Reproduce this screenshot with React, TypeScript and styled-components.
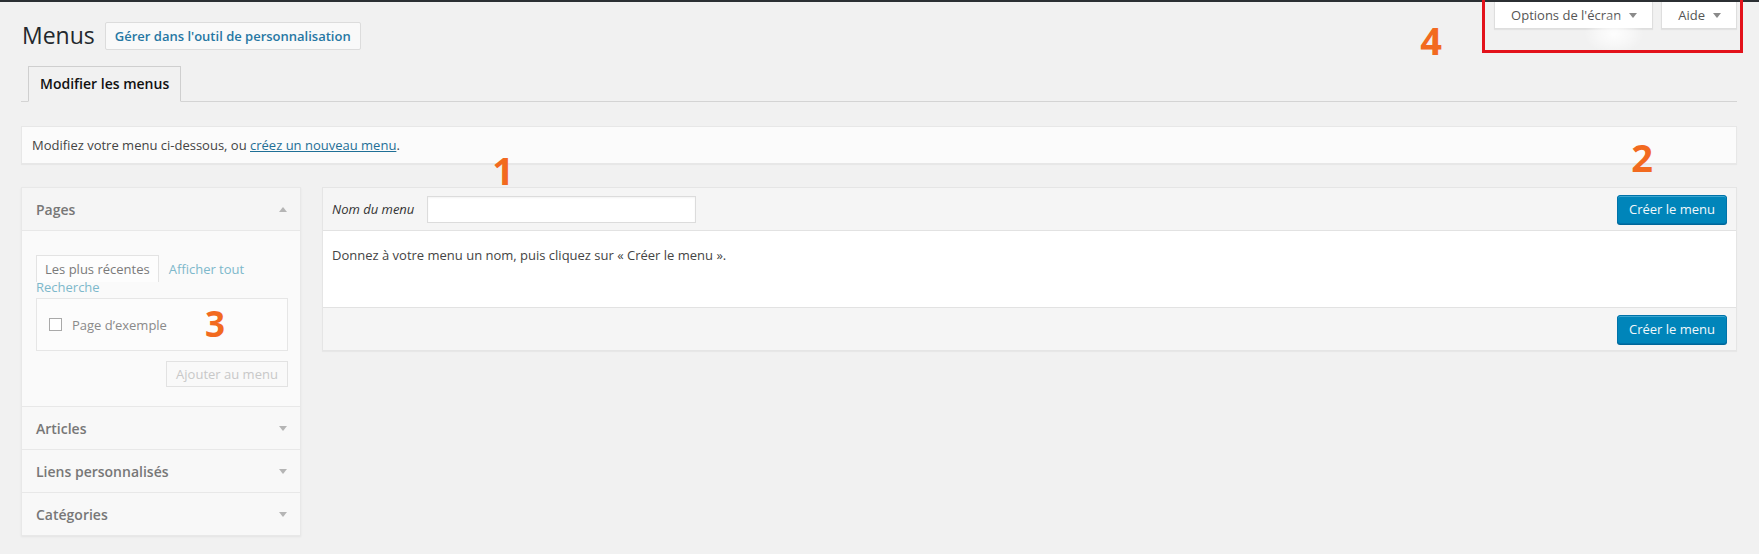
import React from 'react';
import styled, {createGlobalStyle} from 'styled-components';

const GlobalStyle = createGlobalStyle`
  body {
    margin: 0;
    background: #f1f1f1;
    font-family: "Open Sans", "Liberation Sans", sans-serif;
    font-size: 13px;
    color: #444;
  }
`;

const Page = styled.div`
  position: relative;
  min-height: 554px;
`;

const AdminBarEdge = styled.div`
  height: 2px;
  background: #2b2f33;
`;

const Wrap = styled.div`
  padding: 0 22px 0 21px;
`;

const TopRow = styled.div`
  display: flex;
  justify-content: space-between;
  align-items: flex-start;
`;

const TitleGroup = styled.div`
  display: flex;
  align-items: center;
  margin-top: 19px;
`;

const PageTitle = styled.h1`
  margin: 0 0 0 1px;
  font-size: 23px;
  font-weight: 400;
  line-height: 29px;
  color: #23282d;
`;

const TitleAction = styled.a`
  margin-left: 10px;
  height: 28px;
  box-sizing: border-box;
  padding: 0 9px;
  border: 1px solid #dcdcdc;
  border-radius: 2px;
  background: #f9f9f9;
  color: #2677a3;
  font-size: 13px;
  font-weight: 600;
  line-height: 26px;
  text-decoration: none;
`;

const ScreenMeta = styled.div`
  position: relative;
  display: flex;
  gap: 8px;
`;

const MetaButton = styled.div`
  height: 27px;
  box-sizing: border-box;
  display: flex;
  align-items: center;
  gap: 8px;
  padding: 0 15px 0 16px;
  background: #fff;
  border: 1px solid #dedede;
  border-top: 0;
  box-shadow: 0 1px 1px rgba(0, 0, 0, 0.06);
  color: #555;
  font-size: 13px;
`;

const Glow = styled.div`
  position: absolute;
  left: 90px;
  top: 12px;
  width: 60px;
  height: 40px;
  background: radial-gradient(ellipse at center, rgba(255, 255, 255, 0.9) 0%, rgba(255, 255, 255, 0.5) 35%, rgba(255, 255, 255, 0) 70%);
  pointer-events: none;
`;

const RedFrame = styled.div`
  position: absolute;
  left: -12px;
  right: -6px;
  top: -2px;
  height: 53px;
  box-sizing: border-box;
  border: 3px solid #e3121b;
  border-top: 0;
  pointer-events: none;
`;

const NavTabs = styled.div`
  display: flex;
  margin-top: 16px;
  padding-left: 7px;
  border-bottom: 1px solid #d4d4d4;
`;

const NavTab = styled.div`
  height: 36px;
  box-sizing: border-box;
  margin-bottom: -1px;
  padding: 0 11px;
  border: 1px solid #cfcfcf;
  border-bottom-color: #f1f1f1;
  background: #f1f1f1;
  color: #111;
  font-size: 14px;
  font-weight: 600;
  line-height: 34px;
`;

const Notice = styled.div`
  margin-top: 24px;
  padding: 0 10px;
  background: #fbfbfb;
  border: 1px solid #e7e7e7;
  box-shadow: 0 1px 1px rgba(0, 0, 0, 0.04);
  line-height: 36px;
  color: #444;
`;

const TextLink = styled.a`
  color: #1f6f96;
  text-decoration: underline;
`;

const Columns = styled.div`
  display: flex;
  align-items: flex-start;
  gap: 21px;
  margin-top: 23px;
`;

const SideColumn = styled.div`
  flex: none;
  width: 280px;
  box-sizing: border-box;
  background: #fafafa;
  border: 1px solid #e8e8e8;
  box-shadow: 0 1px 2px rgba(0, 0, 0, 0.06);
`;

const SectionHead = styled.div<{$open?: boolean}>`
  height: 42px;
  display: flex;
  align-items: center;
  justify-content: space-between;
  padding: 0 13px 0 14px;
  background: ${p => (p.$open ? '#f5f5f5' : '#f8f8f8')};
  border-bottom: ${p => (p.$open ? '1px solid #e8e8e8' : '0')};
  color: #777;
  font-size: 14px;
  font-weight: 600;

  & + & {
    border-top: 1px solid #e8e8e8;
  }
`;

const SectionBody = styled.div`
  padding: 29px 12px 19px 14px;
  border-bottom: 1px solid #e8e8e8;
  background: #fafafa;
`;

const ItemTabs = styled.div`
  display: flex;
  flex-wrap: wrap;
  column-gap: 10px;
  line-height: 18px;
  font-size: 13px;
`;

const ItemTab = styled.span`
  margin: -5px 0 -4px;
  padding: 4px 8px;
  border: 1px solid #e3e3e3;
  border-bottom: 0;
  background: #fdfdfd;
  color: #7a7a7a;
`;

const ItemTabLink = styled.span`
  color: #7db8cb;
`;

const ItemList = styled.div`
  height: 53px;
  box-sizing: border-box;
  margin-top: 2px;
  padding: 0 12px;
  display: flex;
  align-items: center;
  gap: 10px;
  background: #fcfcfc;
  border: 1px solid #e6e6e6;
  color: #8a8a8a;
`;

const CheckBox = styled.span`
  width: 13px;
  height: 13px;
  box-sizing: border-box;
  border: 1px solid #a9a9a9;
  background: #fff;
`;

const AddRow = styled.div`
  display: flex;
  justify-content: flex-end;
  margin-top: 10px;
`;

const DisabledButton = styled.div`
  width: 122px;
  height: 26px;
  box-sizing: border-box;
  border: 1px solid #e2e2e2;
  background: #f9f9f9;
  color: #c8c8c8;
  font-size: 13px;
  line-height: 24px;
  text-align: center;
`;

const MenuEditor = styled.div`
  flex: 1;
  background: #fff;
  border: 1px solid #e5e5e5;
  box-shadow: 0 1px 1px rgba(0, 0, 0, 0.04);
`;

const EditorBar = styled.div<{$top?: boolean}>`
  height: 42px;
  display: flex;
  align-items: center;
  padding: 0 9px;
  background: #f5f5f5;
  border-bottom: ${p => (p.$top ? '1px solid #e2e2e2' : '0')};
`;

const FieldLabel = styled.label`
  font-style: italic;
  color: #333;
  font-size: 13px;
`;

const NameInput = styled.input`
  margin-left: 13px;
  width: 269px;
  height: 27px;
  box-sizing: border-box;
  border: 1px solid #dcdcdc;
  background: #fff;
  box-shadow: inset 0 1px 2px rgba(0, 0, 0, 0.05);
  font-family: inherit;
  font-size: 13px;
  outline: none;
`;

const PrimaryButton = styled.button`
  margin-left: auto;
  height: 29px;
  padding: 0 11px;
  border: 1px solid #0073aa;
  border-radius: 3px;
  background: #0085ba;
  box-shadow: 0 1px 0 #006799, inset 0 1px 0 rgba(120, 200, 230, 0.5);
  color: #f2f8fb;
  font-family: inherit;
  font-size: 13px;
`;

const EditorBody = styled.div`
  height: 77px;
  box-sizing: border-box;
  padding: 15px 10px 0 9px;
  border-bottom: 1px solid #e2e2e2;
  line-height: 19px;
  color: #444;
`;

const Marker = styled.div<{$size: number}>`
  position: absolute;
  width: 40px;
  text-align: center;
  font-size: ${p => p.$size}px;
  line-height: ${p => p.$size}px;
  font-weight: 700;
  color: #f26a1f;
  pointer-events: none;
`;

const Caret = ({up, color}: {up?: boolean; color: string}) => (
  <svg width="8" height="5" viewBox="0 0 8 5">
    <polygon points={up ? '0,5 8,5 4,0' : '0,0 8,0 4,5'} fill={color}/>
  </svg>
);

const sections = ['Articles', 'Liens personnalisés', 'Catégories'];

export default function App() {
  return <Page>
    <GlobalStyle/>
    <AdminBarEdge/>
    <Wrap>
      <TopRow>
        <TitleGroup>
          <PageTitle>Menus</PageTitle>
          <TitleAction>Gérer dans l'outil de personnalisation</TitleAction>
        </TitleGroup>
        <ScreenMeta>
          <MetaButton>Options de l'écran <Caret color="#8a8a8a"/></MetaButton>
          <MetaButton>Aide <Caret color="#8a8a8a"/></MetaButton>
          <Glow/>
          <RedFrame/>
        </ScreenMeta>
      </TopRow>

      <NavTabs>
        <NavTab>Modifier les menus</NavTab>
      </NavTabs>

      <Notice>
        Modifiez votre menu ci-dessous, ou <TextLink>créez un nouveau menu</TextLink>.
      </Notice>

      <Columns>
        <SideColumn>
          <SectionHead $open>
            Pages
            <Caret up color="#b5b5b5"/>
          </SectionHead>
          <SectionBody>
            <ItemTabs>
              <ItemTab>Les plus récentes</ItemTab>
              <ItemTabLink>Afficher tout</ItemTabLink>
              <ItemTabLink>Recherche</ItemTabLink>
            </ItemTabs>
            <ItemList>
              <CheckBox/>
              Page d’exemple
            </ItemList>
            <AddRow>
              <DisabledButton>Ajouter au menu</DisabledButton>
            </AddRow>
          </SectionBody>
          {sections.map(title => <SectionHead key={title}>
            {title}
            <Caret color="#b5b5b5"/>
          </SectionHead>)}
        </SideColumn>

        <MenuEditor>
          <EditorBar $top>
            <FieldLabel>Nom du menu</FieldLabel>
            <NameInput/>
            <PrimaryButton>Créer le menu</PrimaryButton>
          </EditorBar>
          <EditorBody>
            Donnez à votre menu un nom, puis cliquez sur « Créer le menu ».
          </EditorBody>
          <EditorBar>
            <PrimaryButton>Créer le menu</PrimaryButton>
          </EditorBar>
        </MenuEditor>
      </Columns>
    </Wrap>

    <Marker $size={38} style={{left: 483, top: 151}}>1</Marker>
    <Marker $size={38} style={{left: 1622, top: 138}}>2</Marker>
    <Marker $size={35} style={{left: 195, top: 306}}>3</Marker>
    <Marker $size={38} style={{left: 1411, top: 21}}>4</Marker>
  </Page>;
}
